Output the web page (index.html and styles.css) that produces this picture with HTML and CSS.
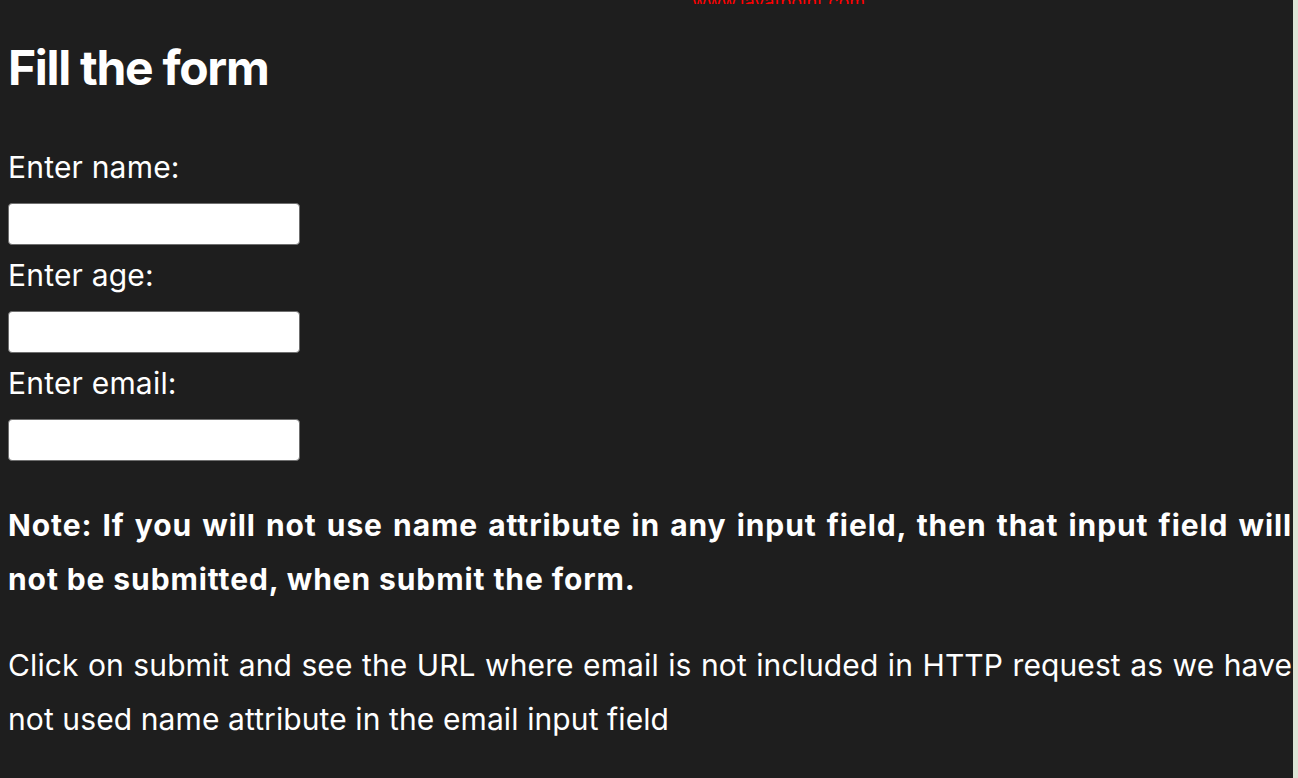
FILE: index.html
```html
<!DOCTYPE html>
<html lang="en">
<head>
    <meta charset="UTF-8">
    <meta name="viewport" content="width=device-width, initial-scale=1.0">
    <title>Fill the form</title>
    <link rel="stylesheet" href="styles.css">
</head>
<body>
    <div class="page">
        <div class="site-link">www.javatpoint.com</div>

        <h1>Fill the form</h1>

        <form action="#" method="get">
            <label for="name">Enter name:</label>
            <input type="text" id="name" name="name">

            <label for="age">Enter age:</label>
            <input type="text" id="age" name="age">

            <label for="email">Enter email:</label>
            <input type="text" id="email">
        </form>

        <p class="note">Note: If you will not use name attribute in any input field, then that input field will not be submitted, when submit the form.</p>

        <p>Click on submit and see the URL where email is not included in HTTP request as we have not used name attribute in the email input field</p>
    </div>
    <div class="edge"></div>
</body>
</html>
```

FILE: styles.css
```css
html, body {
    height: 100%;
}
body {
    margin: 0;
    display: flex;
    background-color: #1e1e1e;
    color: #ffffff;
    font-family: Inter, "Open Sans", sans-serif;
    overflow: hidden;
}
.page {
    flex: 1;
    padding: 0 1px 0 8px;
}
.edge {
    width: 5px;
    background-color: #dde4d6;
}
.site-link {
    height: 4px;
    overflow: hidden;
    margin-left: 684px;
    color: #ff0000;
    font-size: 18px;
    line-height: 4px;
    display: flex;
    align-items: flex-end;
}
h1 {
    font-size: 48px;
    font-weight: 700;
    line-height: 58px;
    letter-spacing: -1.3px;
    margin: 35px 0 0 0;
}
form {
    margin: 0;
}
label {
    display: block;
    font-size: 30px;
    line-height: 36px;
    letter-spacing: 0.2px;
    margin: 12px 0 18px 0;
}
form label:first-child {
    margin-top: 52px;
}
input {
    display: block;
    width: 292px;
    height: 42px;
    box-sizing: border-box;
    border: 1px solid #6f6f6f;
    border-radius: 4px;
    background-color: #ffffff;
    padding: 2px 6px;
    margin: 0;
}
p {
    font-size: 30px;
    line-height: 54px;
    letter-spacing: 0.1px;
    margin: 32px 0 0 0;
    text-align: justify;
}
.note {
    font-weight: 700;
    letter-spacing: 0.9px;
    margin-top: 37px;
}
```
